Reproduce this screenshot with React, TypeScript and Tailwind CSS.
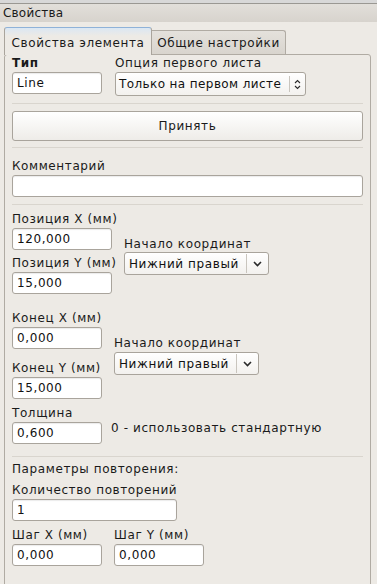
import React from "react";

const font = { fontFamily: '"DejaVu Sans", "Noto Sans", sans-serif' };

function Input({ w, value }: { w: string; value?: string }) {
  return (
    <div
      className={`${w} h-[22px] bg-white border border-[#a9a49c] rounded-[3px] shadow-[inset_0_1px_1px_rgba(0,0,0,0.08)] pl-[4px] flex items-center text-[12px] tracking-[0.6px] text-[#111] leading-none`}
    >
      {value}
    </div>
  );
}

function Label({ children, bold, className = "" }: { children: React.ReactNode; bold?: boolean; className?: string }) {
  return (
    <div className={`h-[16px] leading-[16px] text-[12px] tracking-[0.6px] text-[#1a1a1a] whitespace-nowrap ${bold ? "font-bold" : ""} ${className}`}>
      {children}
    </div>
  );
}

function ChevronSelect({ w, value, className = "" }: { w: string; value: string; className?: string }) {
  return (
    <div
      className={`${w} h-[23px] flex border border-[#a9a49c] rounded-[3px] bg-gradient-to-b from-white to-[#f3f1ee] text-[12px] tracking-[0.6px] text-[#111] ${className}`}
    >
      <div className="flex-1 flex items-center pl-[4px] whitespace-nowrap">{value}</div>
      <div className="w-[22px] border-l border-[#c9c5be] my-[1px] flex items-center justify-center">
        <svg width="9" height="6" viewBox="0 0 9 6">
          <path d="M1 1 L4.5 4.5 L8 1" fill="none" stroke="#2a2a2a" strokeWidth="1.6" />
        </svg>
      </div>
    </div>
  );
}

function Sep({ className = "" }: { className?: string }) {
  return <div className={`h-[1px] bg-[#d9d5ce] mr-[6px] ${className}`} />;
}

export default function App() {
  return (
    <div className="w-[377px] h-[584px] overflow-hidden bg-[#edeae5] relative" style={font}>
      {/* title bar */}
      <div className="h-[3px] bg-[#d8d8d8]" />
      <div className="h-[19px] border-t border-[#9a9893] bg-gradient-to-b from-[#e2dfda] to-[#d7d3cd] flex items-center pl-[3px] text-[12px] tracking-[0.2px] text-[#1a1a1a]">
        Свойства
      </div>

      {/* tabs */}
      <div className="mt-[5px] pl-[4px] flex items-end h-[27px] relative z-10">
        <div className="w-[148px] h-[28px] border border-[#a9a49c] border-b-0 border-t-[#8fb2d8] rounded-t-[3px] bg-[linear-gradient(#dbe7f3,#edeae5_8px)] flex items-center justify-center text-[12px] tracking-[0.6px] text-[#1a1a1a] -mb-[1px] pt-[2px]">
          Свойства элемента
        </div>
        <div className="w-[134px] h-[24px] border border-[#b0aba3] border-b-0 border-l-0 rounded-tr-[3px] bg-gradient-to-b from-[#e4e1dc] to-[#d9d5ce] flex items-center justify-center text-[12px] tracking-[0.6px] text-[#1a1a1a] pt-[1px]">
          Общие настройки
        </div>
      </div>

      {/* panel */}
      <div className="ml-[4px] w-[367px] h-[560px] border border-[#b0aba3] rounded-[3px] pl-[7px] pr-[1px]">
        {/* row 1 */}
        <div className="flex mt-0">
          <div className="w-[103px]">
            <Label bold>Тип</Label>
            <div className="mt-[1px]">
              <Input w="w-[90px]" value="Line" />
            </div>
          </div>
          <div>
            <Label>Опция первого листа</Label>
            <div className="mt-[1px] w-[191px] h-[24px] flex border border-[#a9a49c] rounded-[3px] bg-gradient-to-b from-white to-[#f3f1ee] text-[12px] tracking-[0.4px] text-[#111]">
              <div className="flex-1 flex items-center pl-[3px] whitespace-nowrap overflow-hidden">Только на первом листе</div>
              <div className="w-[16px] shrink-0 border-l border-[#c9c5be] my-[3px] flex items-center justify-center">
                <svg width="7" height="11" viewBox="0 0 7 11">
                  <path d="M1 4 L3.5 1.5 L6 4 M1 7 L3.5 9.5 L6 7" fill="none" stroke="#2a2a2a" strokeWidth="1.1" />
                </svg>
              </div>
            </div>
          </div>
        </div>

        <Sep className="mt-[7px]" />

        {/* button */}
        <div className="mt-[7px] w-[351px] h-[30px] border border-[#a9a49c] rounded-[3px] bg-gradient-to-b from-white to-[#eeece8] flex items-center justify-center text-[12px] tracking-[0.6px] text-[#1a1a1a]">
          Принять
        </div>

        <Sep className="mt-[6px]" />

        {/* comment */}
        <Label className="mt-[10px]">Комментарий</Label>
        <div className="mt-[1px]">
          <Input w="w-[351px]" />
        </div>

        <Sep className="mt-[7px]" />

        {/* position */}
        <div className="flex mt-[6px]">
          <div className="w-[112px]">
            <Label>Позиция X (мм)</Label>
            <div className="mt-[1px]">
              <Input w="w-[100px]" value="120,000" />
            </div>
            <Label className="mt-[5px]">Позиция Y (мм)</Label>
            <div className="mt-[1px]">
              <Input w="w-[100px]" value="15,000" />
            </div>
          </div>
          <div className="mt-[25px]">
            <Label>Начало координат</Label>
            <ChevronSelect w="w-[145px]" value="Нижний правый" className="mt-[0px]" />
          </div>
        </div>

        {/* end */}
        <div className="flex mt-[16px]">
          <div className="w-[102px]">
            <Label>Конец X (мм)</Label>
            <div className="mt-[1px]">
              <Input w="w-[90px]" value="0,000" />
            </div>
            <Label className="mt-[11px]">Конец Y (мм)</Label>
            <div className="mt-[1px]">
              <Input w="w-[90px]" value="15,000" />
            </div>
          </div>
          <div className="mt-[25px]">
            <Label>Начало координат</Label>
            <ChevronSelect w="w-[145px]" value="Нижний правый" className="mt-[1px]" />
          </div>
        </div>

        {/* thickness */}
        <div className="flex mt-[6px]">
          <div className="w-[99px]">
            <Label>Толщина</Label>
            <div className="mt-[1px]">
              <Input w="w-[90px]" value="0,600" />
            </div>
          </div>
          <div className="mt-[15px] text-[12px] tracking-[0.6px] text-[#1a1a1a] leading-[16px] whitespace-nowrap">
            0 - использовать стандартную
          </div>
        </div>

        <Sep className="mt-[12px]" />

        <Label className="mt-[4px]">Параметры повторения:</Label>
        <Label className="mt-[5px]">Количество повторений</Label>
        <div className="mt-[1px]">
          <Input w="w-[165px]" value="1" />
        </div>

        <div className="flex mt-[6px]">
          <div className="w-[102px]">
            <Label>Шаг X (мм)</Label>
            <div className="mt-[1px]">
              <Input w="w-[90px]" value="0,000" />
            </div>
          </div>
          <div>
            <Label>Шаг Y (мм)</Label>
            <div className="mt-[1px]">
              <Input w="w-[90px]" value="0,000" />
            </div>
          </div>
        </div>
      </div>
    </div>
  );
}
